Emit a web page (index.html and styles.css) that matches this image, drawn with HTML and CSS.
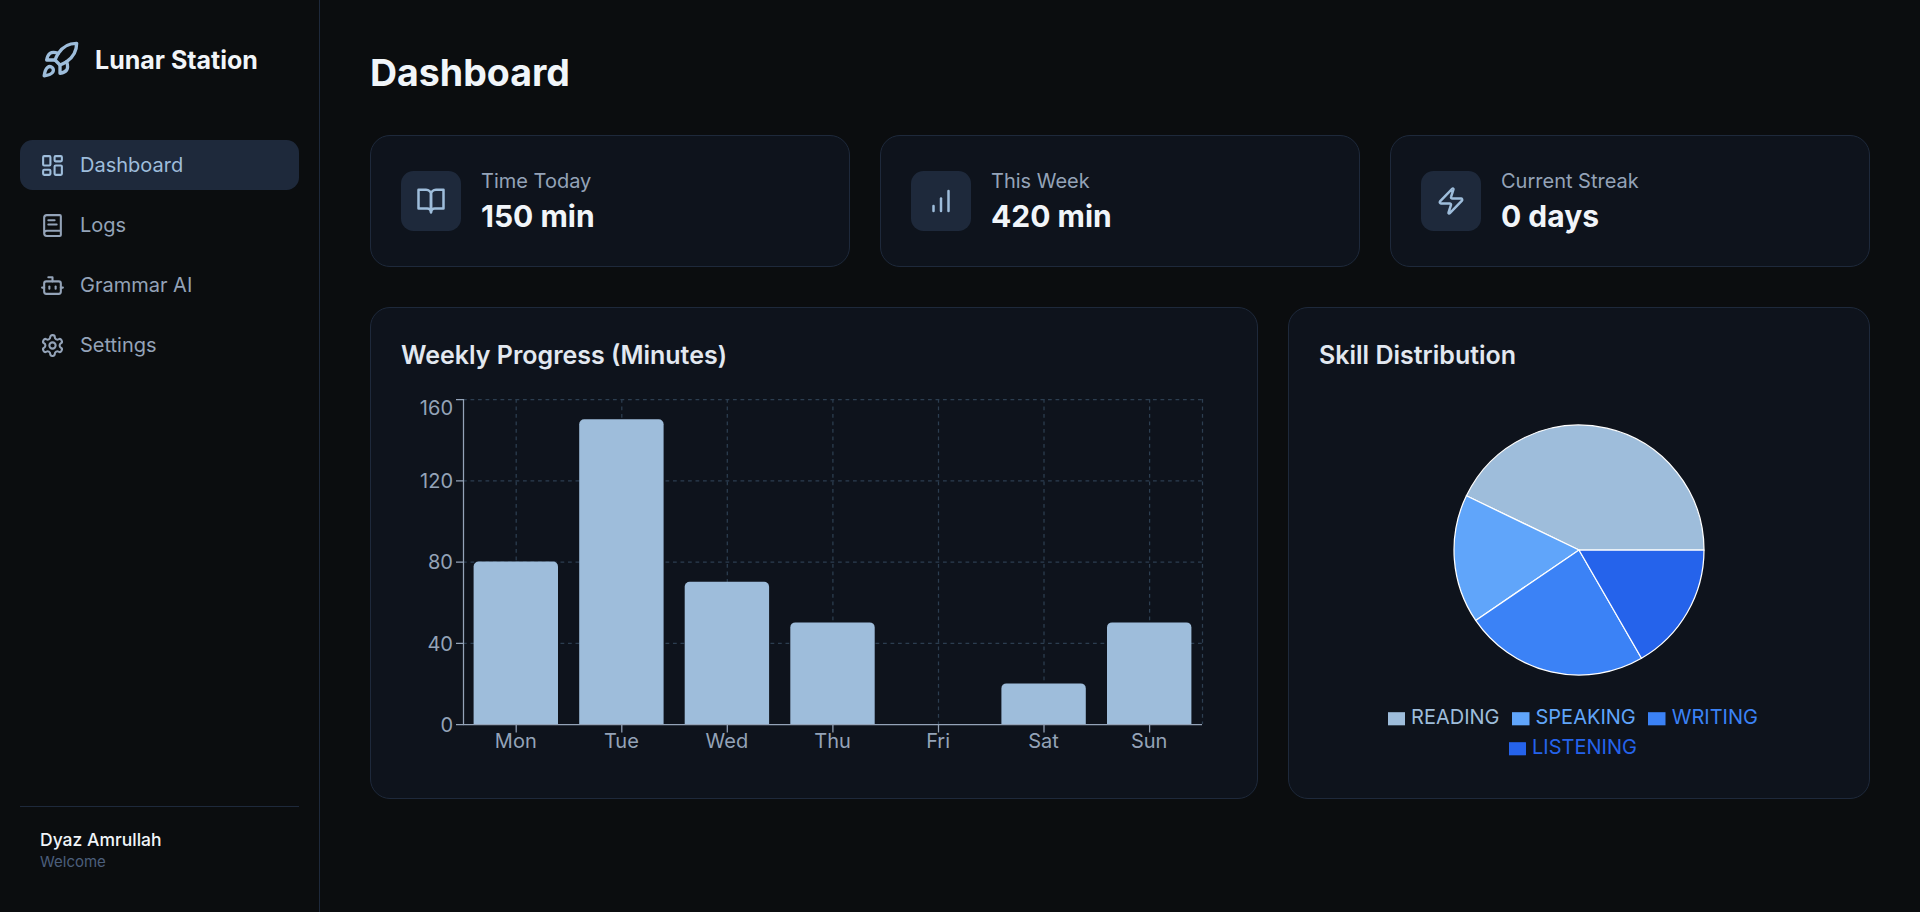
FILE: index.html
```html
<!DOCTYPE html>
<html lang="en">
<head>
  <meta charset="UTF-8" />
  <meta name="viewport" content="width=device-width, initial-scale=1.0">
  <title>Lunar Station</title>
  <link rel="stylesheet" href="styles.css">
</head>
<body>
<div class="app">

  <!-- Sidebar -->
  <aside class="sidebar">
    <div class="brand">
      <svg class="icon brand-icon" viewBox="0 0 24 24"><path d="M4.5 16.5c-1.5 1.26-2 5-2 5s3.74-.5 5-2c.71-.84.7-2.13-.09-2.91a2.18 2.18 0 0 0-2.91-.09z"/><path d="m12 15-3-3a22 22 0 0 1 2-3.95A12.88 12.88 0 0 1 22 2c0 2.72-.78 7.5-6 11a22.35 22.35 0 0 1-4 2z"/><path d="M9 12H4s.55-3.03 2-4c1.62-1.08 5 0 5 0"/><path d="M12 15v5s3.03-.55 4-2c1.08-1.62 0-5 0-5"/></svg>
      <span class="brand-name">Lunar Station</span>
    </div>
    <nav class="nav">
      <a class="nav-item active">
        <svg class="icon" viewBox="0 0 24 24"><rect width="7" height="9" x="3" y="3" rx="1"/><rect width="7" height="5" x="14" y="3" rx="1"/><rect width="7" height="9" x="14" y="12" rx="1"/><rect width="7" height="5" x="3" y="16" rx="1"/></svg>
        Dashboard
      </a>
      <a class="nav-item">
        <svg class="icon" viewBox="0 0 24 24"><path d="M4 19.5v-15A2.5 2.5 0 0 1 6.5 2H19a1 1 0 0 1 1 1v18a1 1 0 0 1-1 1H6.5a1 1 0 0 1 0-5H20"/><path d="M8 11h8"/><path d="M8 7h6"/></svg>
        Logs
      </a>
      <a class="nav-item">
        <svg class="icon" viewBox="0 0 24 24"><path d="M12 8V4H8"/><rect width="16" height="12" x="4" y="8" rx="2"/><path d="M2 14h2"/><path d="M20 14h2"/><path d="M15 13v2"/><path d="M9 13v2"/></svg>
        Grammar AI
      </a>
      <a class="nav-item">
        <svg class="icon" viewBox="0 0 24 24"><path d="M12.22 2h-.44a2 2 0 0 0-2 2v.18a2 2 0 0 1-1 1.73l-.43.25a2 2 0 0 1-2 0l-.15-.08a2 2 0 0 0-2.73.73l-.22.38a2 2 0 0 0 .73 2.73l.15.1a2 2 0 0 1 1 1.72v.51a2 2 0 0 1-1 1.74l-.15.09a2 2 0 0 0-.73 2.73l.22.38a2 2 0 0 0 2.73.73l.15-.08a2 2 0 0 1 2 0l.43.25a2 2 0 0 1 1 1.73V20a2 2 0 0 0 2 2h.44a2 2 0 0 0 2-2v-.18a2 2 0 0 1 1-1.73l.43-.25a2 2 0 0 1 2 0l.15.08a2 2 0 0 0 2.73-.73l.22-.39a2 2 0 0 0-.73-2.73l-.15-.08a2 2 0 0 1-1-1.74v-.5a2 2 0 0 1 1-1.74l.15-.09a2 2 0 0 0 .73-2.73l-.22-.38a2 2 0 0 0-2.73-.73l-.15.08a2 2 0 0 1-2 0l-.43-.25a2 2 0 0 1-1-1.73V4a2 2 0 0 0-2-2z"/><circle cx="12" cy="12" r="3"/></svg>
        Settings
      </a>
    </nav>
    <div class="user">
      <div class="user-name">Dyaz Amrullah</div>
      <div class="user-note">Welcome</div>
    </div>
  </aside>

  <!-- Main content -->
  <main class="main">
    <h1 class="page-title">Dashboard</h1>

    <section class="stats">
      <div class="card stat">
        <div class="stat-icon">
          <svg class="icon" viewBox="0 0 24 24"><path d="M2 3h6a4 4 0 0 1 4 4v14a3 3 0 0 0-3-3H2z"/><path d="M22 3h-6a4 4 0 0 0-4 4v14a3 3 0 0 1 3-3h7z"/></svg>
        </div>
        <div>
          <div class="stat-label">Time Today</div>
          <div class="stat-value">150 min</div>
        </div>
      </div>
      <div class="card stat">
        <div class="stat-icon">
          <svg class="icon" viewBox="0 0 24 24"><path d="M12 20V10"/><path d="M18 20V4"/><path d="M6 20v-4"/></svg>
        </div>
        <div>
          <div class="stat-label">This Week</div>
          <div class="stat-value">420 min</div>
        </div>
      </div>
      <div class="card stat">
        <div class="stat-icon">
          <svg class="icon" viewBox="0 0 24 24"><path d="M4 14a1 1 0 0 1-.78-1.63l9.9-10.2a.5.5 0 0 1 .86.46l-1.92 6.02A1 1 0 0 0 13 10h7a1 1 0 0 1 .78 1.63l-9.9 10.2a.5.5 0 0 1-.86-.46l1.92-6.02A1 1 0 0 0 11 14z"/></svg>
        </div>
        <div>
          <div class="stat-label">Current Streak</div>
          <div class="stat-value">0 days</div>
        </div>
      </div>
    </section>

    <section class="charts">
      <div class="card chart-card">
        <h3 class="chart-title">Weekly Progress (Minutes)</h3>
        <div class="chart-box">
          <svg class="chart-svg" viewBox="0 0 826 379">
            <g class="grid">
              <path d="M62 10.5H801M62 91.75H801M62 173H801M62 254.25H801"/>
              <path d="M115.2 10V335M220.8 10V335M326.3 10V335M431.9 10V335M537.5 10V335M643 10V335M748.6 10V335M801.5 10V335"/>
            </g>
            <g class="bars">
              <path d="M72.6 177.5a5 5 0 0 1 5-5h74.4a5 5 0 0 1 5 5V335H72.6z"/>
              <path d="M178.2 35.3a5 5 0 0 1 5-5h74.4a5 5 0 0 1 5 5V335H178.2z"/>
              <path d="M283.7 197.8a5 5 0 0 1 5-5h74.4a5 5 0 0 1 5 5V335H283.7z"/>
              <path d="M389.3 238.4a5 5 0 0 1 5-5h74.4a5 5 0 0 1 5 5V335H389.3z"/>
              <path d="M600.4 299.4a5 5 0 0 1 5-5h74.4a5 5 0 0 1 5 5V335H600.4z"/>
              <path d="M706 238.4a5 5 0 0 1 5-5h74.4a5 5 0 0 1 5 5V335H706z"/>
            </g>
            <g class="axis">
              <path d="M62.5 10V335.5M62 335.5H801"/>
              <path d="M55 10.5h7.5M55 91.75h7.5M55 173h7.5M55 254.25h7.5M55 335.5h7.5"/>
              <path d="M115.2 336v7.5M220.8 336v7.5M326.3 336v7.5M431.9 336v7.5M537.5 336v7.5M643 336v7.5M748.6 336v7.5"/>
            </g>
            <g class="tick-y">
              <text x="52" y="26">160</text>
              <text x="52" y="99">120</text>
              <text x="52" y="180">80</text>
              <text x="52" y="262">40</text>
              <text x="52" y="343">0</text>
            </g>
            <g class="tick-x">
              <text x="114.8" y="359">Mon</text>
              <text x="220.4" y="359">Tue</text>
              <text x="325.9" y="359">Wed</text>
              <text x="431.5" y="359">Thu</text>
              <text x="537.1" y="359">Fri</text>
              <text x="642.6" y="359">Sat</text>
              <text x="748.2" y="359">Sun</text>
            </g>
          </svg>
        </div>
      </div>

      <div class="card chart-card">
        <h3 class="chart-title">Skill Distribution</h3>
        <div class="chart-box pie-box">
          <svg class="pie-svg" viewBox="0 0 520 313">
            <g class="slices">
              <path class="reading" d="M260 161H385A125 125 0 0 0 147.4 106.8z"/>
              <path class="speaking" d="M260 161L147.4 106.8A125 125 0 0 0 156.7 231.4z"/>
              <path class="writing" d="M260 161L156.7 231.4A125 125 0 0 0 322.5 269.3z"/>
              <path class="listening" d="M260 161L322.5 269.3A125 125 0 0 0 385 161z"/>
            </g>
          </svg>
          <ul class="legend">
            <li class="legend-item reading"><svg viewBox="0 0 32 32"><path d="M0 4h32v24H0z"/></svg>READING</li>
            <li class="legend-item speaking"><svg viewBox="0 0 32 32"><path d="M0 4h32v24H0z"/></svg>SPEAKING</li>
            <li class="legend-item writing"><svg viewBox="0 0 32 32"><path d="M0 4h32v24H0z"/></svg>WRITING</li>
            <li class="legend-item listening"><svg viewBox="0 0 32 32"><path d="M0 4h32v24H0z"/></svg>LISTENING</li>
          </ul>
        </div>
      </div>
    </section>
  </main>
</div>
</body>
</html>
```

FILE: styles.css
```css
* { box-sizing: border-box; }
body { margin:0; background:#0b0d0f; color:#e2e8f0; font-family:Inter, "Noto Sans", sans-serif; }
h1, h3, ul { margin:0; padding:0; }

.app { display:flex; height:912px; overflow:hidden; }
.icon { width:25px; height:25px; flex:none; fill:none; stroke:currentColor; stroke-width:2; stroke-linecap:round; stroke-linejoin:round; }

/* Sidebar */
.sidebar { width:320px; flex:none; display:flex; flex-direction:column; padding:40px 20px 0; border-right:1px solid #1e293b; }
.brand { display:flex; align-items:center; gap:15px; padding-left:20px; height:40px; margin-bottom:60px; }
.brand-icon { width:40px; height:40px; color:#9ebddb; }
.brand-name { font-size:25px; font-weight:700; color:#f1f5f9; }
.nav { display:flex; flex-direction:column; gap:10px; flex:1; }
.nav-item { display:flex; align-items:center; gap:15px; height:50px; padding:0 20px; border-radius:12.5px; font-size:20px; color:#94a3b8; }
.nav-item.active { background:#1e293b; color:#9ebddb; }
.user { border-top:1px solid #1e293b; height:106px; padding:20px 20px 0; }
.user-name { font-size:17.5px; font-weight:500; line-height:25px; color:#f1f5f9; }
.user-note { font-size:15px; line-height:20px; color:#4b5f7c; }

/* Main */
.main { flex:1; padding:50px; min-width:0; }
.page-title { font-size:37.5px; font-weight:700; line-height:45px; margin-bottom:40px; color:#f1f5f9; }
.card { background:#0e131c; border:1px solid #1e293b; border-radius:20px; }
.stats { display:grid; grid-template-columns:repeat(3, 1fr); gap:30px; margin-bottom:40px; }
.stat { display:flex; align-items:center; gap:20px; padding:30px; }
.stat-icon { width:60px; height:60px; border-radius:12.5px; background:#1e293b; color:#9ebddb; display:flex; align-items:center; justify-content:center; }
.stat-icon .icon { width:30px; height:30px; }
.stat-label { font-size:20px; line-height:30px; color:#94a3b8; }
.stat-value { font-size:30px; font-weight:700; line-height:40px; color:#f1f5f9; }

.charts { display:grid; grid-template-columns:888px 1fr; gap:30px; }
.chart-card { padding:30px; }
.chart-title { font-size:25px; font-weight:600; line-height:35px; margin-bottom:16px; color:#e2e8f0; }
.chart-box { height:379px; }
.chart-svg { display:block; width:826px; height:379px; }
.pie-svg { display:block; width:520px; height:313px; }

.grid path { fill:none; stroke:#2c3e50; stroke-width:1.25; stroke-dasharray:3.75 3.75; }
.bars path { fill:#9ebddb; }
.axis path { fill:none; stroke:#94a3b8; stroke-width:1.25; }
.tick-y text, .tick-x text { font-size:20px; fill:#94a3b8; }
.tick-y text { text-anchor:end; }
.tick-x text { text-anchor:middle; }

.slices path { stroke:#fff; stroke-width:1.25; stroke-linejoin:round; }
.slices .reading { fill:#9ebddb; }
.slices .speaking { fill:#60a5fa; }
.slices .writing { fill:#3b82f6; }
.slices .listening { fill:#2563eb; }

.legend { list-style:none; display:flex; flex-wrap:wrap; justify-content:center; font-size:20px; line-height:30px; }
.legend-item { margin-right:12.5px; white-space:nowrap; }
.legend-item svg { width:17.5px; height:17.5px; vertical-align:middle; margin-right:6px; fill:currentColor; }
.legend-item.reading { color:#9ebddb; }
.legend-item.speaking { color:#60a5fa; }
.legend-item.writing { color:#3b82f6; }
.legend-item.listening { color:#2563eb; }
```
